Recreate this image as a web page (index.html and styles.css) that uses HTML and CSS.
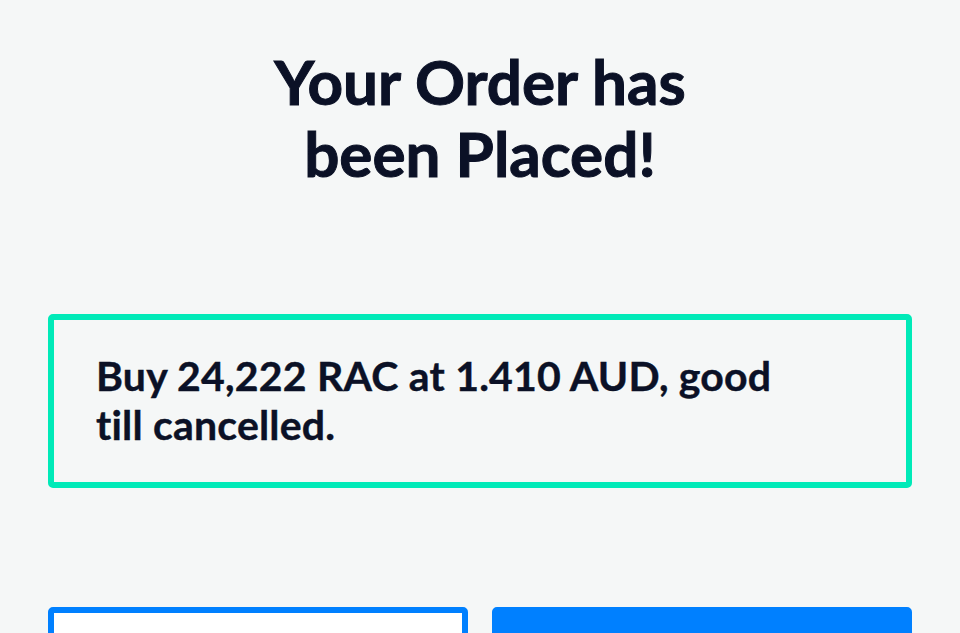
FILE: index.html
```html
<!DOCTYPE html>
<html lang="en">
<head>
    <meta charset="UTF-8">
    <title>Order Placed</title>
    <link rel="stylesheet" href="styles.css">
</head>
<body>
    <div class="page">
        <h1 class="title">Your Order has<br>been Placed!</h1>

        <div class="summary">
            <p>Buy 24,222 RAC at 1.410 AUD, good till cancelled.</p>
        </div>

        <div class="actions">
            <button class="btn btn-outline" aria-label="View Orders"></button>
            <button class="btn btn-primary" aria-label="Done"></button>
        </div>
    </div>
</body>
</html>
```

FILE: styles.css
```css
body {
    margin: 0;
    padding: 0;
    background: #f5f7f7;
    color: #0b1126;
    font-family: Lato, "Open Sans", sans-serif;
}
.page {
    padding: 45px 48px 0;
}
.title {
    margin: 0;
    text-align: center;
    font-size: 62px;
    line-height: 72px;
    font-weight: 700;
    -webkit-text-stroke: 1px #0b1126;
}
.summary {
    margin-top: 125px;
    border: 6px solid #00eab8;
    border-radius: 5px;
    padding: 31px 42px 33px;
}
.summary p {
    margin: 0;
    max-width: 720px;
    font-size: 41px;
    line-height: 49px;
    font-weight: 700;
    letter-spacing: 0.2px;
    -webkit-text-stroke: 0.4px #0b1126;
}
.actions {
    display: grid;
    grid-template-columns: 1fr 1fr;
    gap: 24px;
    margin-top: 119px;
}
.btn {
    height: 110px;
    border: 6px solid #0080ff;
    border-radius: 5px;
    cursor: pointer;
}
.btn-outline {
    background: #fff;
}
.btn-primary {
    background: #0080ff;
}
```
